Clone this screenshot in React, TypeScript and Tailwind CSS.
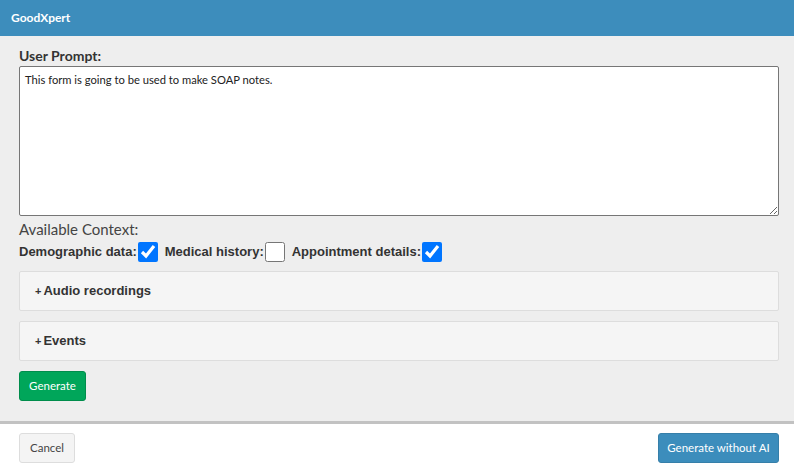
import { useState } from "react";

const ui = { fontFamily: '"Source Sans Pro", Lato, "Open Sans", sans-serif' };
const arial = { fontFamily: '"Liberation Sans", Arial, sans-serif' };

function Collapsible({ title }: { title: string }) {
  const [open, setOpen] = useState(false);
  return (
    <div className="rounded-[2px] border border-[#dddddd] bg-[#f5f5f5]">
      <button
        onClick={() => setOpen(!open)}
        className="flex h-[38px] w-full items-center pl-[15px] text-[13px] font-bold text-[#333333]"
        style={arial}
      >
        <span className="mr-[2px] text-[11px]">{open ? "−" : "+"}</span>
        {title}
      </button>
    </div>
  );
}

export default function App() {
  const [ctx, setCtx] = useState({ demo: true, history: false, appt: true });

  return (
    <div className="flex h-[471px] w-[794px] flex-col bg-white" style={ui}>
      <header className="flex h-[36px] items-center bg-[#3d8dbc] px-[11px]">
        <span className="text-[12px] font-bold text-white">GoodXpert</span>
      </header>

      <main className="flex flex-1 flex-col border-b-[3px] border-[#c2c2c2] bg-[#eeeeee] pl-[19px] pr-[15px] pt-[10px]">
        <label className="text-[14px] font-bold leading-[20px] text-[#333333]">User Prompt:</label>
        <textarea
          className="h-[150px] w-full resize-y rounded-[2px] border border-[#767676] bg-white px-[5px] py-[5px] text-[11.2px] text-[#222222] outline-none"
          defaultValue="This form is going to be used to make SOAP notes."
        />
        <div className="mt-[2px] text-[15px] leading-[22px] text-[#444444]">Available Context:</div>
        <div className="mt-[2px] flex items-center text-[13px] font-bold text-[#333333]" style={arial}>
          <span>Demographic data:</span>
          <input
            type="checkbox"
            checked={ctx.demo}
            onChange={(e) => setCtx({ ...ctx, demo: e.target.checked })}
            className="ml-[1px] h-[20px] w-[20px] accent-[#0075ff]"
          />
          <span className="ml-[7px]">Medical history:</span>
          <input
            type="checkbox"
            checked={ctx.history}
            onChange={(e) => setCtx({ ...ctx, history: e.target.checked })}
            className="ml-[1px] h-[20px] w-[20px] accent-[#0075ff]"
          />
          <span className="ml-[7px]">Appointment details:</span>
          <input
            type="checkbox"
            checked={ctx.appt}
            onChange={(e) => setCtx({ ...ctx, appt: e.target.checked })}
            className="ml-[1px] h-[20px] w-[20px] accent-[#0075ff]"
          />
        </div>

        <div className="mt-[9px] flex flex-col gap-[10px]">
          <Collapsible title="Audio recordings" />
          <Collapsible title="Events" />
        </div>

        <button className="mt-[10px] h-[30px] w-[67px] rounded-[3px] border border-[#008d4c] bg-[#00a65a] text-[11.5px] text-white">
          Generate
        </button>
      </main>

      <footer className="flex h-[47px] items-center justify-between pl-[19px] pr-[15px]">
        <button className="h-[30px] w-[56px] rounded-[3px] border border-[#dddddd] bg-[#f4f4f4] text-[11.5px] text-[#444444]">
          Cancel
        </button>
        <button className="h-[30px] w-[121px] rounded-[3px] border border-[#367fa9] bg-[#3c8dbc] text-[11.5px] text-white">
          Generate without AI
        </button>
      </footer>
    </div>
  );
}
